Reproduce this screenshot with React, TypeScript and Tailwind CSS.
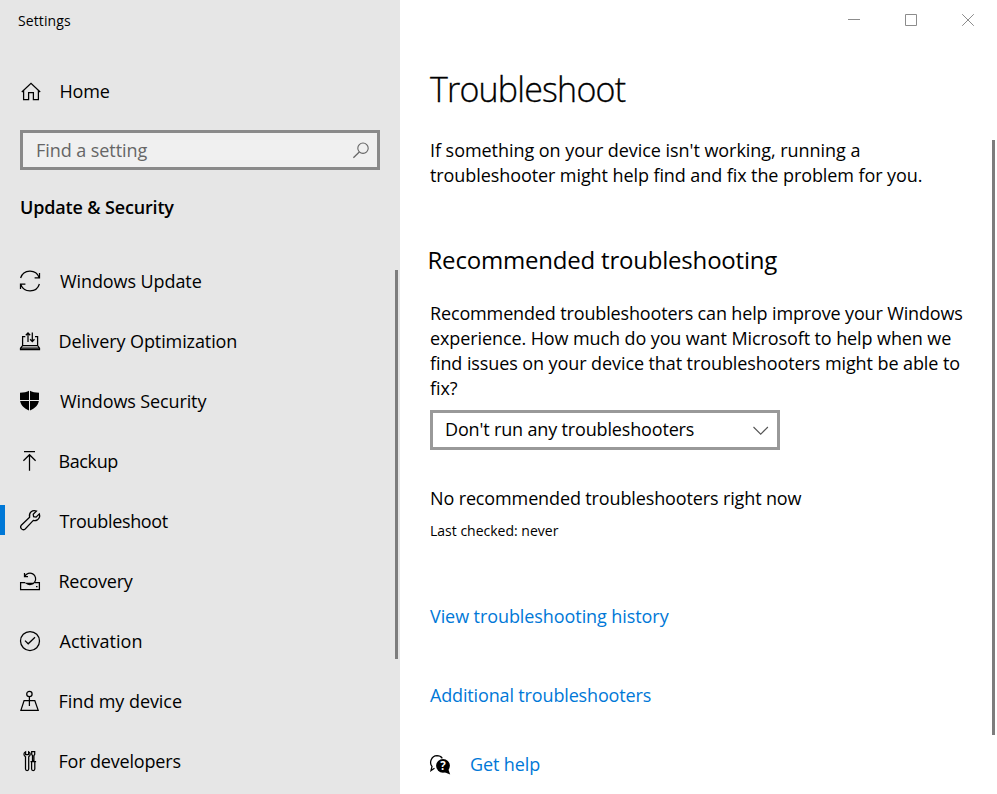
import React from 'react';

interface NavItem {
  label: string;
  icon: React.ReactNode;
  textClass: string;
  active?: boolean;
}

const Icon: React.FC<{ children: React.ReactNode; className?: string }> = ({ children, className = '' }) => (
  <svg
    width="24"
    height="24"
    viewBox="0 0 24 24"
    fill="none"
    stroke="currentColor"
    strokeWidth="1.25"
    className={`shrink-0 ${className}`}
  >
    {children}
  </svg>
);

const navItems: NavItem[] = [
  {
    label: 'Windows Update',
    textClass: 'pl-[18px] tracking-[-0.09px]',
    icon: (
      <Icon>
        <path d="M2.6 9A9.8 9.8 0 0 1 21.2 8.6M21.5 3.9v5h-4.9" />
        <path d="M21.4 15A9.8 9.8 0 0 1 2.8 15.4M2.5 20.1v-5h4.9" />
      </Icon>
    ),
  },
  {
    label: 'Delivery Optimization',
    textClass: 'pl-[16.5px] tracking-[-0.1px]',
    icon: (
      <Icon>
        <path d="M7.3 7.5H4.6v9M17 7.5h2.6v9M4.6 16.5h15l1.9 2.7v1.3h-19v-1.3zM2.5 19h19" />
        <path d="M10 13V4M7.8 6.2 10 4l2.2 2.2M14.3 3.5v9M12.1 10.3l2.2 2.2 2.2-2.2" />
      </Icon>
    ),
  },
  {
    label: 'Windows Security',
    textClass: 'pl-[18px] tracking-[-0.12px]',
    icon: (
      <Icon>
        <path
          d="M11.5 1.6C9 3.2 5.5 3.8 2 3.8V10.5C2 15.5 6 19.5 11.5 21.8C17 19.5 21 15.5 21 10.5V3.8C17.5 3.8 14 3.2 11.5 1.6z"
          fill="currentColor"
          stroke="none"
        />
        <path d="M11.5 1v21M1.5 11.5h20" stroke="#e6e6e6" strokeWidth="1" />
      </Icon>
    ),
  },
  {
    label: 'Backup',
    textClass: 'pl-[16.5px] tracking-[-0.38px]',
    icon: (
      <Icon>
        <path d="M6 2.5h11M11.5 5.5v16.3M5.4 11.8l6.1-6.1 6.1 6.1" />
      </Icon>
    ),
  },
  {
    label: 'Troubleshoot',
    textClass: 'pl-[17.5px] tracking-[-0.34px]',
    active: true,
    icon: (
      <Icon>
        <path d="M18.5 2 15.2 5.2l.4 2.5 2.5.4 3.2-3.3c.9 2.7-.3 5-2 6.1-1.3.8-2.8.9-4 .5L7.2 20c-2.7 2.1-5.9-1.1-3.9-3.8l8.3-8C10.5 3.6 14.5.4 18.5 2z" />
      </Icon>
    ),
  },
  {
    label: 'Recovery',
    textClass: 'pl-[16.5px] tracking-[-0.27px]',
    icon: (
      <Icon>
        <path d="M7.2 13.5H2.6v7h18.8v-7h-4.6M18 17.5h1.5" />
        <path d="M6.8 7.4A5.7 5.7 0 1 1 8.4 14.3h7M6.5 4v3.5H10" />
      </Icon>
    ),
  },
  {
    label: 'Activation',
    textClass: 'pl-[17.5px] tracking-[0.02px]',
    icon: (
      <Icon>
        <circle cx="12" cy="12" r="9.5" />
        <path d="m7 11.6 3.2 3.2L17 8.2" />
      </Icon>
    ),
  },
  {
    label: 'Find my device',
    textClass: 'pl-[16.5px] tracking-[-0.06px]',
    icon: (
      <Icon>
        <circle cx="11.4" cy="5" r="2.7" />
        <path d="M11.4 7.7V17M11.4 11.5H6.1L2.9 21.3h17.3L16.8 11.5h-5.4" />
      </Icon>
    ),
  },
  {
    label: 'For developers',
    textClass: 'pl-[16.5px] tracking-[-0.18px]',
    icon: (
      <Icon>
        <path d="M7.6 2.7C5.3 3.7 5.6 6.7 7.5 7.7V20c0 2 3.2 2 3.2 0V7.7c1.9-1 2.2-4-.1-5v2.9H7.6z" />
        <path d="M13.7 2.5h3v2.8l-.8 1.4v5h-1.4v-5l-.8-1.4zM12.5 12.5h5.6M13.6 12.5v7.6c0 2 3.2 2 3.2 0v-7.6" />
      </Icon>
    ),
  },
];

const Sidebar: React.FC = () => (
  <aside className="relative flex w-[400px] shrink-0 flex-col bg-[#e6e6e6]">
    <div className="flex h-[41px] items-center pl-[18px] text-[14px] tracking-[0.1px]">Settings</div>
    <a className="mt-[30px] flex h-10 items-center pl-[18px]">
      <Icon>
        <path d="M3.8 13 13 4.3 22.2 13M5.6 11.5v9h5v-7h4.8v7h5v-9" />
      </Icon>
      <span className="pl-[17.5px] tracking-[-0.2px]">Home</span>
    </a>
    <div className="mx-5 mt-[19px] flex h-10 items-center justify-between border-[3px] border-[#8a8a8a] bg-[#f0f0f0] pr-[3px] pl-[13px] text-[#666]">
      <span className="tracking-[-0.07px]">Find a setting</span>
      <Icon>
        <circle cx="13" cy="10.2" r="5.2" strokeWidth="1.1" />
        <path d="m9.3 14-5.9 5.8" />
      </Icon>
    </div>
    <h2 className="mt-[22px] pl-5 leading-[30px] font-semibold tracking-[-0.16px]">Update &amp; Security</h2>
    <nav className="mt-[29px]">
      {navItems.map((item) => (
        <a key={item.label} className="flex h-[60px] items-center">
          <span className={item.active ? 'mb-0.5 h-[30px] w-[5px] bg-[#0078d7]' : 'h-[30px] w-[5px]'} />
          <span className="w-[13px]" />
          {item.icon}
          <span className={item.textClass}>{item.label}</span>
        </a>
      ))}
    </nav>
    <div className="absolute top-[270px] right-[2px] h-[389px] w-[3px] bg-[#7d7d7d]" />
  </aside>
);

const WindowControls: React.FC = () => (
  <div className="flex h-10 items-center justify-end pr-[0.5px]">
    {['M6 7.5h12', 'M6.5 2.5h11v11h-11z', 'm6.2 2.2 11.6 11.6m0-11.6L6.2 13.8'].map((d) => (
      <button key={d} className="flex w-[57px] justify-center">
        <svg width="24" height="16" viewBox="0 0 24 16" fill="none" stroke="#8c8c8c">
          <path d={d} />
        </svg>
      </button>
    ))}
  </div>
);

const App: React.FC = () => {
  return (
    <div className="flex h-[794px] w-[997px] overflow-hidden bg-white font-['Open_Sans',sans-serif] text-[18px] leading-[25px] text-black">
      <Sidebar />
      <main className="relative flex-1">
        <WindowControls />
        <div className="flex flex-col items-start pl-[30px] whitespace-nowrap">
          <h1 className="mt-[24px] text-[34px] leading-[50px] font-light tracking-[-0.8px] [-webkit-text-stroke:0.3px_black]">
            Troubleshoot
          </h1>
          <p className="mt-[24px]">
            <span className="block tracking-[-0.05px]">If something on your device isn't working, running a</span>
            <span className="block tracking-[-0.085px]">troubleshooter might help find and fix the problem for you.</span>
          </p>
          <h2 className="mt-[56px] ml-[-2.5px] text-[24px] leading-[32px] tracking-[-0.2px]">
            Recommended troubleshooting
          </h2>
          <p className="mt-[25px]">
            <span className="block tracking-[-0.145px]">Recommended troubleshooters can help improve your Windows</span>
            <span className="block tracking-[-0.1px]">experience. How much do you want Microsoft to help when we</span>
            <span className="block tracking-[-0.09px]">find issues on your device that troubleshooters might be able to</span>
            <span className="block tracking-[-0.1px]">fix?</span>
          </p>
          <button className="mt-[9px] flex h-10 w-[350px] items-center justify-between border-[3px] border-[#999] pr-1 pb-[1px] pl-3">
            <span className="tracking-[-0.16px]">Don't run any troubleshooters</span>
            <Icon className="text-[#555]">
              <path d="m4.5 9 7.2 7.2L18.900 9" strokeWidth="1.1" />
            </Icon>
          </button>
          <p className="mt-[36px] tracking-[-0.13px]">No recommended troubleshooters right now</p>
          <p className="mt-[10px] text-[14px] leading-[20px]">Last checked: never</p>
          <a className="mt-[63px] tracking-[-0.08px] text-[#0078d7]">View troubleshooting history</a>
          <a className="mt-[54px] tracking-[-0.15px] text-[#0078d7]">Additional troubleshooters</a>
          <a className="mt-[44px] ml-[-2px] flex items-center">
            <Icon>
              <path d="M6.5 15.3 3 17.6l1-4.2C1 9.8 3.2 3 9 2.7c2.6 0 4.2 1 5.3 2.6" />
              <circle cx="15" cy="12.8" r="6.9" fill="currentColor" stroke="none" />
              <path d="m16 19 6.2 2.6-2-5.6z" fill="currentColor" stroke="none" />
              <text x="15" y="17" textAnchor="middle" fontSize="11.5" fontWeight="700" fill="#fff" stroke="none">
                ?
              </text>
            </Icon>
            <span className="pl-[18px] tracking-[-0.12px] text-[#0078d7]">Get help</span>
          </a>
        </div>
        <div className="absolute top-[140px] right-[2px] h-[595px] w-[3px] bg-[#7d7d7d]" />
      </main>
    </div>
  );
};

export default App;
